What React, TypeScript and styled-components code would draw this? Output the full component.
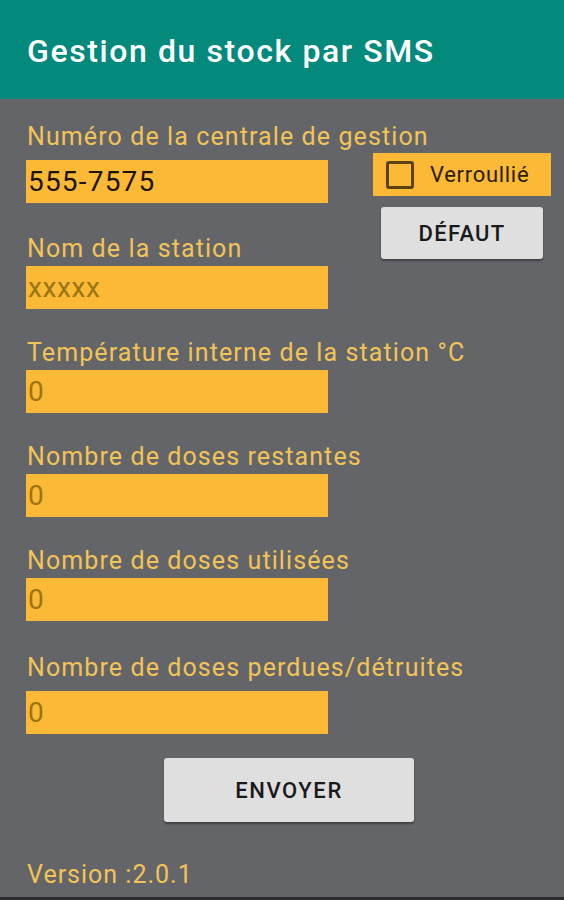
import { createGlobalStyle } from "styled-components";
import styled from "styled-components";

const GlobalStyle = createGlobalStyle`
  html, body {
    margin: 0;
    padding: 0;
    background: #646569;
    font-family: Roboto, "Liberation Sans", sans-serif;
  }
  * {
    box-sizing: border-box;
  }
`;

type FieldData = {
  label: string;
  value: string;
  hint?: boolean;
  gap?: number;
  space?: number;
};

const bottomFields: FieldData[] = [
  { label: "Température interne de la station °C", value: "0", hint: true },
  { label: "Nombre de doses restantes", value: "0", hint: true },
  { label: "Nombre de doses utilisées", value: "0", hint: true },
  {
    label: "Nombre de doses perdues/détruites",
    value: "0",
    hint: true,
    gap: 7,
    space: 31,
  },
];

const Field = ({ label, value, hint, gap, space }: FieldData) => (
  <FieldBlock $space={space ?? 28}>
    <Label>{label}</Label>
    <Input $gap={gap ?? 1} $hint={!!hint}>
      {value}
    </Input>
  </FieldBlock>
);

const App = () => {
  return (
    <Page>
      <GlobalStyle />
      <AppBar>
        <Title>Gestion du stock par SMS</Title>
      </AppBar>
      <Body>
        <TopRow>
          <LeftColumn>
            <Field
              label="Numéro de la centrale de gestion"
              value="555-7575"
              gap={7}
              space={0}
            />
            <Field label="Nom de la station" value="xxxxx" hint space={30} />
          </LeftColumn>
          <RightColumn>
            <LockBox>
              <CheckSquare />
              <LockText>Verroullié</LockText>
            </LockBox>
            <DefaultButton>DÉFAUT</DefaultButton>
          </RightColumn>
        </TopRow>
        {bottomFields.map((f) => (
          <Field key={f.label} {...f} />
        ))}
        <SendButton>ENVOYER</SendButton>
        <Version>Version :2.0.1</Version>
      </Body>
      <NavStrip />
    </Page>
  );
};

const Page = styled.div`
  display: flex;
  flex-direction: column;
  height: 100vh;
  background: #646569;
  overflow: hidden;
`;

const AppBar = styled.header`
  height: 99px;
  padding: 33px 0 0 27px;
  background: #038a7c;
  flex-shrink: 0;
`;

const Title = styled.h1`
  margin: 0;
  font-size: 32px;
  line-height: 36px;
  font-weight: 500;
  letter-spacing: 1.6px;
  color: #ffffff;
`;

const Body = styled.main`
  flex: 1;
  display: flex;
  flex-direction: column;
  align-items: flex-start;
  padding: 22px 0 0 26px;
`;

const TopRow = styled.div`
  display: flex;
  align-items: flex-start;
`;

const LeftColumn = styled.div`
  width: 302px;
  flex-shrink: 0;
  display: flex;
  flex-direction: column;
`;

const FieldBlock = styled.div<{ $space: number }>`
  display: flex;
  flex-direction: column;
  margin-top: ${({ $space }) => $space}px;
`;

const Label = styled.div`
  padding-left: 1px;
  font-size: 25px;
  line-height: 32px;
  letter-spacing: 1.1px;
  color: #f2c457;
  white-space: nowrap;
`;

const Input = styled.div<{ $gap: number; $hint: boolean }>`
  width: 302px;
  height: 43px;
  margin-top: ${({ $gap }) => $gap}px;
  padding: 0 0 0 2px;
  display: flex;
  align-items: center;
  background: #fcb935;
  font-size: 28px;
  letter-spacing: ${({ $hint }) => ($hint ? "0.6px" : "1.2px")};
  color: ${({ $hint }) => ($hint ? "#9a7514" : "#1d1305")};
`;

const RightColumn = styled.div`
  display: flex;
  flex-direction: column;
  align-items: flex-start;
  margin: 32px 0 0 45px;
`;

const LockBox = styled.label`
  width: 178px;
  height: 43px;
  display: flex;
  align-items: center;
  padding-left: 13px;
  background: #fcb935;
`;

const CheckSquare = styled.span`
  width: 28px;
  height: 28px;
  border: 3px solid #5e420e;
  border-radius: 3px;
`;

const LockText = styled.span`
  margin-left: 16px;
  font-size: 22px;
  letter-spacing: 0.7px;
  color: #2a1c07;
`;

const RaisedButton = styled.button`
  border: none;
  border-radius: 3px;
  background: #dfdfdf;
  box-shadow: 0 2px 2px rgba(0, 0, 0, 0.35);
  font-family: Roboto, "Liberation Sans", sans-serif;
  font-weight: 500;
  font-size: 22px;
  color: #1a1a1a;
  padding: 0;
`;

const DefaultButton = styled(RaisedButton)`
  width: 162px;
  height: 52px;
  margin: 11px 0 0 8px;
  letter-spacing: 1.3px;
`;

const SendButton = styled(RaisedButton)`
  width: 250px;
  height: 64px;
  margin: 24px 0 0 138px;
  letter-spacing: 1.6px;
`;

const Version = styled.div`
  margin-top: 37px;
  padding-left: 1px;
  font-size: 25px;
  line-height: 32px;
  letter-spacing: 1px;
  color: #f2c457;
`;

const NavStrip = styled.div`
  height: 3px;
  flex-shrink: 0;
  background: #2c2c2e;
`;

export default App;
